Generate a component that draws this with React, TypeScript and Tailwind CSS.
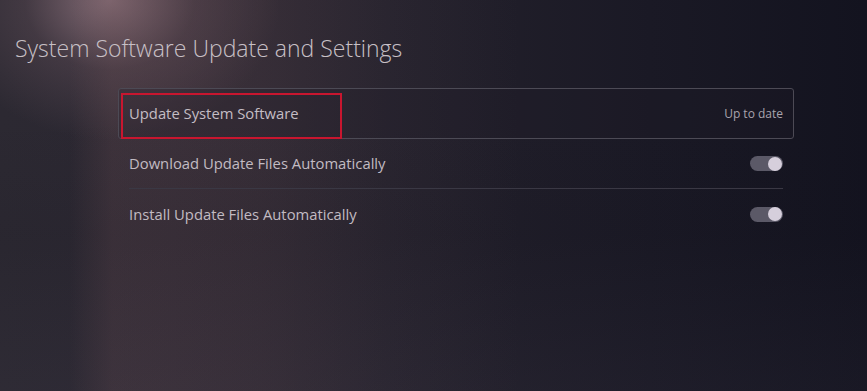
import React from "react";

function Toggle() {
  return (
    <div className="w-[33px] h-[15px] rounded-full bg-[#5b5967] flex items-center justify-end pr-[1px]">
      <div className="w-[14px] h-[14px] rounded-full bg-[#d6cfdc]" />
    </div>
  );
}

export default function App() {
  return (
    <div
      className="w-[867px] h-[391px] overflow-hidden relative text-[#c9c2c8]"
      style={{ fontFamily: '"Open Sans", "Noto Sans", sans-serif' }}
    >
      <div className="absolute inset-0 bg-[linear-gradient(90deg,#2c2932_0%,#2a2631_20%,#24212c_45%,#1a1925_75%,#13131f_100%)]" />
      <div className="absolute inset-0 bg-[radial-gradient(ellipse_170px_140px_at_110px_0px,rgba(160,130,140,0.75),rgba(120,95,105,0.3)_50%,transparent_100%)]" />
      <div className="absolute inset-0 bg-[linear-gradient(90deg,transparent_8%,rgba(110,80,85,0.28)_13%,rgba(100,75,80,0.25)_30%,rgba(80,65,75,0.12)_45%,transparent_60%)]" />
      <div className="absolute inset-0 bg-[linear-gradient(180deg,rgba(0,0,0,0)_30%,rgba(20,18,28,0.1)_60%,rgba(60,55,70,0.15)_100%)]" />

      <div className="relative flex flex-col">
        <h1 className="pl-[15px] pt-[32px] text-[23px] leading-[32px] font-light text-[#c8c0c6]">
          System Software Update and Settings
        </h1>

        <div className="ml-[118px] w-[676px] mt-[24px] flex flex-col">
          <div className="relative h-[51px] rounded-[3px] border border-[#4c4a55] flex items-center justify-between px-[10px] bg-[rgba(30,28,38,0.25)]">
            <span className="text-[14.8px] text-[#c4bdc4]">Update System Software</span>
            <span className="text-[12px] text-[#a9a4ad]">Up to date</span>
            <div className="absolute left-[2px] top-[4px] w-[221px] h-[46px] border-2 border-[#c8162f]" />
          </div>

          <div className="h-[50px] mx-[11px] flex items-center justify-between border-b border-[#3a3844]">
            <span className="text-[14.8px] text-[#c2bbc2]">Download Update Files Automatically</span>
            <Toggle />
          </div>

          <div className="h-[50px] mx-[11px] flex items-center justify-between">
            <span className="text-[14.8px] text-[#c2bbc2]">Install Update Files Automatically</span>
            <Toggle />
          </div>
        </div>
      </div>
    </div>
  );
}
